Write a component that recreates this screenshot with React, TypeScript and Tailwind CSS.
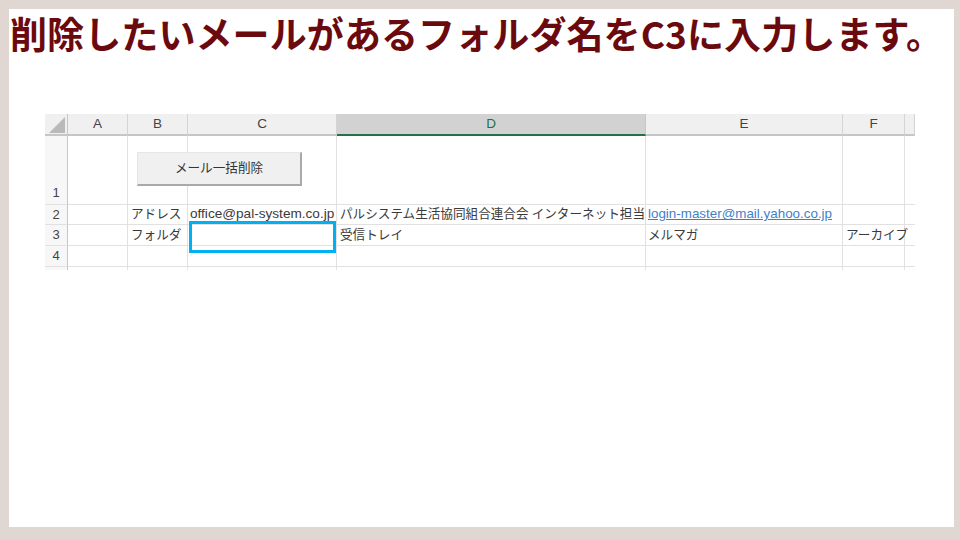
import React from "react";

const cellFont = { fontFamily: '"Liberation Sans", "Noto Sans CJK JP", sans-serif' };

export default function App() {
  const cols = ["A", "B", "C", "D", "E", "F", ""];
  const gl = "border-r border-b border-[#e1e1e1]";
  const rh =
    "bg-[#f7f7f7] border-r border-r-[#c6c6c6] border-b border-b-[#e1e1e1] flex items-center justify-center text-[13px] text-[#444]";
  return (
    <div className="w-[960px] h-[540px] bg-[#e0d7d2] p-[9px] pr-[6px] pb-[13px]">
      <div className="w-full h-full bg-white flex flex-col">
        <h1
          className="pt-[6px] pl-[1px] text-[37px] leading-none font-bold text-[#6b0a0e] whitespace-nowrap tracking-[0.1px]"
          style={{ fontFamily: '"Noto Sans CJK JP", sans-serif' }}
        >
          削除したいメールがあるフォルダ名をC3に入力します。
        </h1>
        <div className="mt-[62px] ml-[36px] relative w-[870px] overflow-hidden" style={cellFont}>
          <div className="grid grid-cols-[23px_60px_60px_149px_309px_197px_62px_10px] grid-rows-[22px_69px_20px_21px_21px_3px] text-[12.6px] text-[#3a3a3a]">
            {/* header row */}
            <div className="bg-[#f0f0f0] border-r border-b-2 border-[#c6c6c6] flex items-end justify-end">
              <svg width="16" height="16" viewBox="0 0 16 16" className="mb-[1px] mr-[2px]">
                <polygon points="16,0 16,16 0,16" fill="#b9b9b9" />
              </svg>
            </div>
            {cols.map((c, i) =>
              c === "D" ? (
                <div
                  key={i}
                  className="bg-[#d2d2d2] border-r border-[#c6c6c6] border-b-2 border-b-[#217346] flex items-center justify-center text-[13.5px] text-[#217346]"
                >
                  D
                </div>
              ) : (
                <div
                  key={i}
                  className="bg-[#f0f0f0] border-r border-[#d4d4d4] border-b-2 border-b-[#c6c6c6] flex items-center justify-center text-[13.5px] text-[#444]"
                >
                  {c}
                </div>
              )
            )}

            {/* row 1 */}
            <div className="bg-[#f7f7f7] border-r border-r-[#c6c6c6] border-b border-b-[#e1e1e1] flex items-end justify-center pb-[2px] text-[13px] text-[#444]">
              1
            </div>
            <div className={gl}></div>
            <div className={`${gl} relative overflow-visible`}>
              <button className="absolute left-[9px] top-[16px] w-[165px] h-[34px] bg-[#f0f0f0] border-r-2 border-b-2 border-[#a9a9a9] border-t border-l border-t-[#e6e6e6] border-l-[#e6e6e6] text-[12.6px] text-[#333] z-10">
                メール一括削除
              </button>
            </div>
            <div className={gl}></div>
            <div className={gl}></div>
            <div className={gl}></div>
            <div className={gl}></div>
            <div className="border-b border-[#e1e1e1]"></div>

            {/* row 2 */}
            <div className={rh}>2</div>
            <div className={gl}></div>
            <div className={`${gl} flex items-center pl-[3px] whitespace-nowrap overflow-hidden`}>アドレス</div>
            <div className={`${gl} flex items-center pl-[2px] whitespace-nowrap overflow-hidden text-[13.6px]`}>
              office@pal-system.co.jp
            </div>
            <div className={`${gl} flex items-center pl-[3px] whitespace-nowrap overflow-hidden`}>
              パルシステム生活協同組合連合会<span className="inline-block w-[12px]"></span>インターネット担当
            </div>
            <div className={`${gl} flex items-center pl-[2px] whitespace-nowrap overflow-hidden text-[13.4px]`}>
              <span className="text-[#3f7fc9] underline">login-master@mail.yahoo.co.jp</span>
            </div>
            <div className={gl}></div>
            <div className="border-b border-[#e1e1e1]"></div>

            {/* row 3 */}
            <div className={rh}>3</div>
            <div className={gl}></div>
            <div className={`${gl} flex items-center pl-[3px] whitespace-nowrap overflow-hidden`}>フォルダ</div>
            <div className={gl}></div>
            <div className={`${gl} flex items-center pl-[3px] whitespace-nowrap overflow-hidden`}>受信トレイ</div>
            <div className={`${gl} flex items-center pl-[2px] whitespace-nowrap overflow-hidden`}>メルマガ</div>
            <div className={`${gl} flex items-center pl-[3px] whitespace-nowrap relative z-10`}>アーカイブ</div>
            <div className="border-b border-[#e1e1e1]"></div>

            {/* row 4 */}
            <div className={rh}>4</div>
            <div className={gl}></div>
            <div className={gl}></div>
            <div className={gl}></div>
            <div className={gl}></div>
            <div className={gl}></div>
            <div className={gl}></div>
            <div className="border-b border-[#e1e1e1]"></div>

            {/* row 5 partial */}
            <div className="bg-[#f7f7f7] border-r border-r-[#c6c6c6]"></div>
            <div className="border-r border-[#e1e1e1]"></div>
            <div className="border-r border-[#e1e1e1]"></div>
            <div className="border-r border-[#e1e1e1]"></div>
            <div className="border-r border-[#e1e1e1]"></div>
            <div className="border-r border-[#e1e1e1]"></div>
            <div className="border-r border-[#e1e1e1]"></div>
            <div></div>
          </div>
          {/* selection overlay */}
          <div className="absolute left-[144px] top-[107px] w-[147px] h-[32px] border-[3px] border-[#00b0f0] pointer-events-none z-20"></div>
        </div>
      </div>
    </div>
  );
}
